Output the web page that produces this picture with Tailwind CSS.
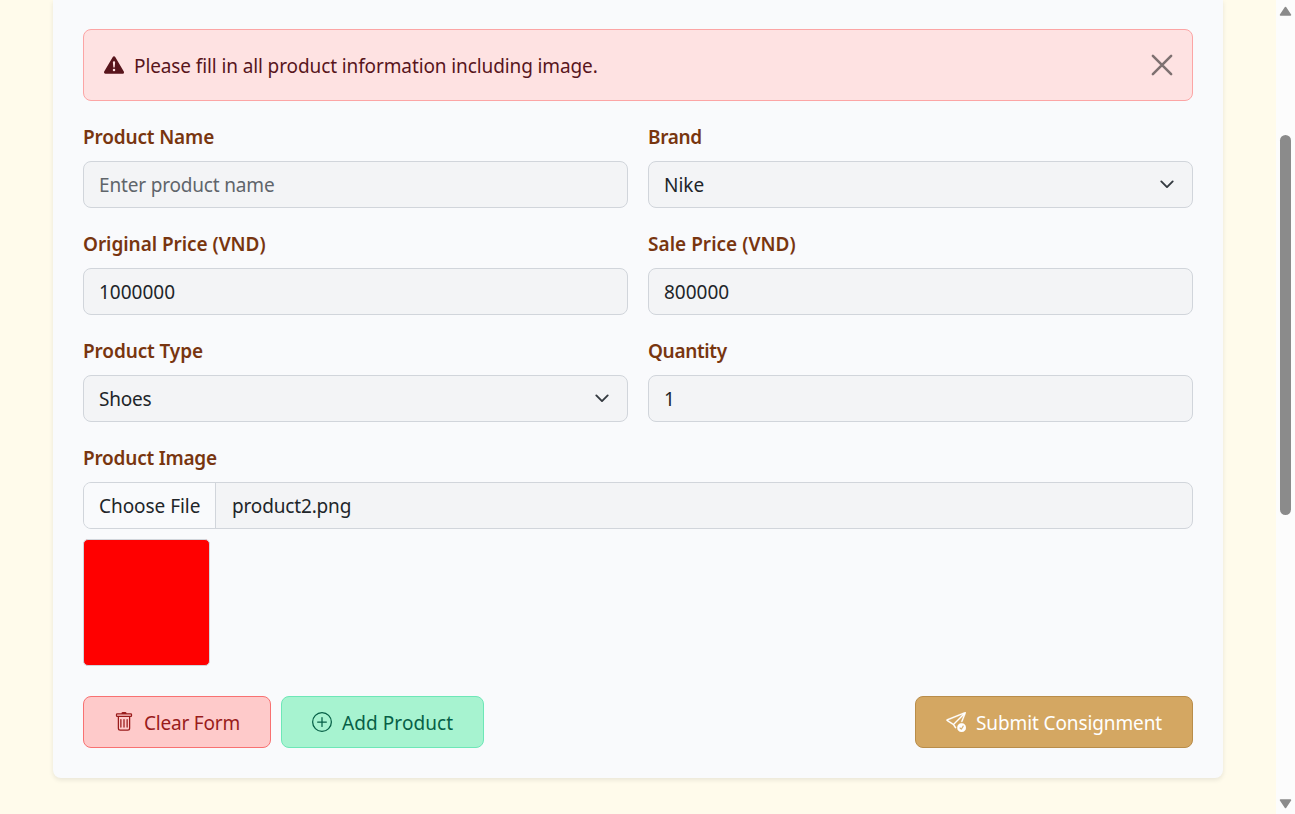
<!DOCTYPE html>
<html lang="en">
<head>
<meta charset="utf-8">
<title>Consignment</title>
<script src="https://cdn.jsdelivr.net/npm/@tailwindcss/browser@4"></script>
</head>
<body class="flex h-[814px] overflow-hidden bg-[#fffbeb] font-['Segoe_UI','Noto_Sans',sans-serif] text-[19px] leading-[30px] text-[#212529]">
<main class="flex-1 pl-[53px] pr-[53px]">
  <section class="h-[778px] w-[1170px] rounded-b-lg bg-[#f9fafc] px-[30px] pt-[29px] shadow-[0_2px_5px_rgba(0,0,0,0.09)]">
    <div class="mb-5 flex h-[72px] items-center rounded-lg border border-[#fca5a5] bg-[#fee2e2] px-5 text-[#58151c]">
      <svg class="mr-2.5 size-5" viewBox="0 0 16 16" fill="currentColor"><path d="M8.982 1.566a1.13 1.13 0 0 0-1.96 0L.165 13.233c-.457.778.091 1.767.98 1.767h13.713c.889 0 1.438-.99.98-1.767zM8 5c.535 0 .954.462.9.995l-.35 3.507a.552.552 0 0 1-1.1 0L7.1 5.995A.905.905 0 0 1 8 5m.002 6a1 1 0 1 1 0 2 1 1 0 0 1 0-2"/></svg>
      <span class="pt-0.5 tracking-[-0.11px]">Please fill in all product information including image.</span>
      <button class="ml-auto" aria-label="Close"><svg class="size-5 overflow-visible opacity-50" viewBox="0 0 16 16"><path d="M.7.7l14.600 14.600M15.300.7.7 15.300" stroke="#000" stroke-width="2" stroke-linecap="round"/></svg></button>
    </div>
    <form class="grid grid-cols-2 gap-5">
      <label class="block"><span class="mb-[9px] block pt-px font-semibold tracking-[-0.16px] text-[#78350f]">Product Name</span>
        <span class="flex h-[47px] items-center rounded-lg border border-[#d1d5db] bg-[#f3f4f6] px-[15px] tracking-[-0.17px] text-[#5f656b]">Enter product name</span></label>
      <label class="block"><span class="mb-[9px] block pt-px font-semibold tracking-[-0.35px] text-[#78350f]">Brand</span>
        <span class="flex h-[47px] items-center justify-between rounded-lg border border-[#d1d5db] bg-[#f3f4f6] pl-[15px] pr-[17px]">Nike<svg class="-mt-px size-4" viewBox="0 0 16 16" fill="none" stroke="#343a40" stroke-width="1.9" stroke-linecap="round" stroke-linejoin="round"><path d="m2.300 5.400 5.700 5.700 5.700-5.700"/></svg></span></label>
      <label class="block"><span class="mb-[9px] block pt-px font-semibold tracking-[-0.05px] text-[#78350f]">Original Price (VND)</span>
        <span class="flex h-[47px] items-center rounded-lg border border-[#d1d5db] bg-[#f3f4f6] px-[15px]">1000000</span></label>
      <label class="block"><span class="mb-[9px] block pt-px font-semibold tracking-[0.03px] text-[#78350f]">Sale Price (VND)</span>
        <span class="flex h-[47px] items-center rounded-lg border border-[#d1d5db] bg-[#f3f4f6] px-[15px]">800000</span></label>
      <label class="block"><span class="mb-[9px] block pt-px font-semibold tracking-[-0.12px] text-[#78350f]">Product Type</span>
        <span class="flex h-[47px] items-center justify-between rounded-lg border border-[#d1d5db] bg-[#f3f4f6] pl-[15px] pr-[17px]"><span class="tracking-[-0.2px]">Shoes</span><svg class="-mt-px size-4" viewBox="0 0 16 16" fill="none" stroke="#343a40" stroke-width="1.9" stroke-linecap="round" stroke-linejoin="round"><path d="m2.300 5.400 5.700 5.700 5.700-5.700"/></svg></span></label>
      <label class="block"><span class="mb-[9px] block pt-px font-semibold tracking-[-0.35px] text-[#78350f]">Quantity</span>
        <span class="flex h-[47px] items-center rounded-lg border border-[#d1d5db] bg-[#f3f4f6] px-[15px]">1</span></label>
      <div class="col-span-2"><span class="mb-[9px] block pt-px font-semibold tracking-[-0.23px] text-[#78350f]">Product Image</span>
        <div class="flex h-[47px] items-stretch overflow-hidden rounded-lg border border-[#d1d5db] bg-[#f3f4f6]">
          <span class="flex w-[132px] items-center border-r border-[#d1d5db] bg-[#f9fafc] pl-[15px] tracking-[-0.05px]">Choose File</span>
          <span class="flex items-center pl-[16px] tracking-[-0.16px]">product2.png</span>
        </div>
        <div class="mt-2.5 size-[127px] rounded-[5px] border border-[#d1d5db] bg-[#ff0000]"></div>
      </div>
    </form>
    <div class="mt-[30px] flex gap-2.5">
      <button class="flex h-[52px] w-[188px] items-center rounded-lg border border-[#f87171] bg-[#fecaca] pl-[30px] pt-0.5 tracking-[-0.2px] text-[#991b1b]">
        <svg class="mr-2.5 size-5 -mt-0.5" viewBox="0 0 16 16" fill="currentColor"><path d="M5.5 5.5A.5.5 0 0 1 6 6v6a.5.5 0 0 1-1 0V6a.5.5 0 0 1 .5-.5m2.5 0a.5.5 0 0 1 .5.5v6a.5.5 0 0 1-1 0V6a.5.5 0 0 1 .5-.5m3 .5a.5.5 0 0 0-1 0v6a.5.5 0 0 0 1 0z"/><path d="M14.500 3a1 1 0 0 1-1 1H13v9a2 2 0 0 1-2 2H5a2 2 0 0 1-2-2V4h-.5a1 1 0 0 1-1-1V2a1 1 0 0 1 1-1H6a1 1 0 0 1 1-1h2a1 1 0 0 1 1 1h3.500a1 1 0 0 1 1 1zM4.118 4 4 4.059V13a1 1 0 0 0 1 1h6a1 1 0 0 0 1-1V4.059L11.882 4zM2.500 3h11V2h-11z"/></svg><span>Clear Form</span></button>
      <button class="flex h-[52px] w-[203px] items-center rounded-lg border border-[#6ee7b7] bg-[#a7f3d0] pl-[30px] pt-0.5 tracking-[0.08px] text-[#065f46]">
        <svg class="mr-2.5 size-5 -mt-0.5" viewBox="0 0 16 16" fill="none" stroke="currentColor" stroke-linecap="round"><circle cx="8" cy="8" r="7.5"/><path d="M8 4.500v7M4.500 8h7"/></svg><span>Add Product</span></button>
      <button class="ml-auto flex h-[52px] w-[278px] items-center rounded-lg border border-[#b98d4a] bg-[#d4a762] pl-[30px] pt-0.5 tracking-[-0.11px] text-white">
        <svg class="mr-2.5 size-5 -mt-0.5" viewBox="0 0 16 16" fill="currentColor" stroke="currentColor" stroke-width="0.2"><path d="M15.964.686a.5.5 0 0 0-.65-.65L.767 5.855a.75.75 0 0 0-.124 1.329l4.995 3.178 1.531 2.406a.5.5 0 0 0 .844-.536L6.637 10.07l7.494-7.494-1.895 4.738a.5.5 0 1 0 .928.372zm-2.540 1.183L5.930 9.363 1.591 6.602z"/><path d="M16 12.500a3.500 3.500 0 1 1-7 0 3.500 3.500 0 0 1 7 0m-1.993-1.679a.5.5 0 0 0-.686.172l-1.170 1.950-.547-.547a.5.5 0 0 0-.708.708l.774.773a.75.75 0 0 0 1.174-.144l1.335-2.226a.5.5 0 0 0-.172-.686"/></svg><span>Submit Consignment</span></button>
    </div>
  </section>
</main>
<aside class="flex w-[19px] flex-col items-center bg-[#fcfcfc]">
  <svg class="mt-1.5 h-[10px] w-[13px]" viewBox="0 0 13 10"><path d="M6.500 1.500 11.500 9h-10z" fill="#8b8b8b" stroke="#8b8b8b" stroke-width="1.500" stroke-linejoin="round"/></svg>
  <div class="mt-[119px] h-[380px] w-[11px] rounded-full bg-[#8b8b8b]"></div>
  <svg class="mb-[5px] mt-auto h-[10px] w-[13px]" viewBox="0 0 13 10"><path d="M6.500 8.500 11.500 1h-10z" fill="#8b8b8b" stroke="#8b8b8b" stroke-width="1.500" stroke-linejoin="round"/></svg>
</aside>
</body>
</html>
